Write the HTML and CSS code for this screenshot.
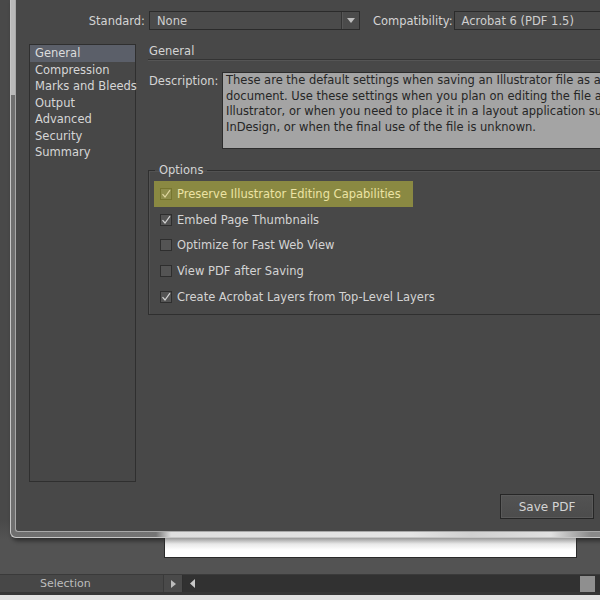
FILE: index.html
```html
<!DOCTYPE html>
<html>
<head>
<meta charset="utf-8">
<link rel="stylesheet" href="styles.css">
</head>
<body>
<div class="screen">
  <div class="desk">
    <div class="frame">
      <div class="dialog">
        <div class="top-row">
          <span class="lbl lbl-std">Standard:</span>
          <div class="select sel-std">
            <span class="sel-text">None</span>
            <span class="sel-arrow"><svg width="8" height="5" viewBox="0 0 8 5"><path d="M0 0H8L4 5Z" fill="#bdbdbd"/></svg></span>
          </div>
          <span class="lbl lbl-comp">Compatibility:</span>
          <div class="select sel-comp">
            <span class="sel-text">Acrobat 6 (PDF 1.5)</span>
          </div>
        </div>
        <div class="main">
          <ul class="nav">
            <li class="active">General</li>
            <li>Compression</li>
            <li>Marks and Bleeds</li>
            <li>Output</li>
            <li>Advanced</li>
            <li>Security</li>
            <li>Summary</li>
          </ul>
          <div class="panel">
            <div class="panel-title">General</div>
            <div class="desc-row">
              <span class="lbl desc-lbl">Description:</span>
              <div class="desc-box">These are the default settings when saving an Illustrator file as an Adobe PDF<br>document. Use these settings when you plan on editing the file again in<br>Illustrator, or when you need to place it in a layout application such as<br>InDesign, or when the final use of the file is unknown.</div>
            </div>
            <fieldset class="options">
              <legend>Options</legend>
              <div class="opt hl"><span class="cb"><svg width="12" height="12" viewBox="0 0 12 12"><path d="M2.5 6.2L5 9L10 2.2" fill="none" stroke="#ddd59e" stroke-width="1.2"/></svg></span><span>Preserve Illustrator Editing Capabilities</span></div>
              <div class="opt"><span class="cb"><svg width="12" height="12" viewBox="0 0 12 12"><path d="M2.5 6.2L5 9L10 2.2" fill="none" stroke="#d2d2d2" stroke-width="1.2"/></svg></span><span>Embed Page Thumbnails</span></div>
              <div class="opt"><span class="cb"></span><span>Optimize for Fast Web View</span></div>
              <div class="opt"><span class="cb"></span><span>View PDF after Saving</span></div>
              <div class="opt"><span class="cb"><svg width="12" height="12" viewBox="0 0 12 12"><path d="M2.5 6.2L5 9L10 2.2" fill="none" stroke="#d2d2d2" stroke-width="1.2"/></svg></span><span>Create Acrobat Layers from Top-Level Layers</span></div>
            </fieldset>
          </div>
        </div>
        <div class="footer">
          <button class="btn">Save PDF</button>
        </div>
      </div>
    </div>
    <div class="doc"></div>
  </div>
  <div class="statusbar">
    <div class="sb-label">Selection</div>
    <div class="sb-btn"><svg width="5" height="8" viewBox="0 0 5 8"><path d="M0 0L5 4L0 8Z" fill="#bdbdbd"/></svg></div>
    <div class="sb-scroll">
      <svg class="sb-left" width="5" height="9" viewBox="0 0 5 9"><path d="M5 0L0 4.5L5 9Z" fill="#c8c8c8"/></svg>
      <div class="sb-thumb"></div>
    </div>
  </div>
  <div class="bottom-edge"></div>
</div>
</body>
</html>
```
FILE: styles.css
```css
html, body {
  margin: 0;
  padding: 0;
}
body {
  width: 600px;
  height: 600px;
  overflow: hidden;
  background: #535353;
  font-family: "DejaVu Sans", sans-serif;
  font-size: 11.5px;
  color: #d4d4d4;
}
.screen {
  display: flex;
  flex-direction: column;
  width: 600px;
  height: 600px;
}
.desk {
  height: 574px;
  background: linear-gradient(#494949 0, #494949 520px, #535353 540px);
  overflow: hidden;
}
.frame {
  margin-left: 10px;
  width: 640px;
  height: 533px;
  border-left: 1px solid #c6c6c6;
  border-bottom: 1px solid #c6c6c6;
  border-bottom-left-radius: 6px;
  padding: 0 0 4px 4px;
  background:
    linear-gradient(#b9b9b9, #b9b9b9) left top / 4px 95px no-repeat,
    linear-gradient(to right, #6f6f6f 0, #747474 145px, #dedede 160px, #e4e4e4 400px, #d0d0d0 460px, #e0e0e0 540px, #8a8a8a 580px);
  box-shadow: 2px 3px 4px rgba(0, 0, 0, 0.45);
}
.dialog {
  height: 532px;
  box-sizing: border-box;
  border-left: 1px solid #a8a8a8;
  border-bottom: 1px solid #a8a8a8;
  border-bottom-left-radius: 3px;
  background: #484848;
  padding-top: 11px;
  display: flex;
  flex-direction: column;
}
.lbl {
  color: #d4d4d4;
  white-space: nowrap;
}
.top-row {
  display: flex;
  align-items: center;
  height: 19px;
}
.lbl-std {
  width: 129px;
  text-align: right;
  margin-right: 4px;
}
.select {
  box-sizing: border-box;
  height: 19px;
  border: 1px solid #2b2b2b;
  background: #4b4b4b;
  display: flex;
  align-items: center;
  color: #cfcfcf;
}
.sel-text {
  padding-left: 7px;
  flex: 1;
  white-space: nowrap;
}
.sel-std {
  width: 211px;
}
.sel-arrow {
  width: 17px;
  height: 17px;
  border-left: 1px solid #343434;
  box-shadow: inset 1px 0 0 #575757;
  display: flex;
  align-items: center;
  justify-content: center;
}
.lbl-comp {
  margin-left: 13px;
  margin-right: 1px;
}
.sel-comp {
  width: 190px;
}
.main {
  display: flex;
  margin-top: 14px;
  padding-left: 13px;
  padding-right: 12px;
}
.nav {
  list-style: none;
  margin: 0;
  padding: 0;
  width: 107px;
  height: 438px;
  box-sizing: border-box;
  border: 1px solid #2f2f2f;
  background: #474747;
  color: #d6d6d6;
  line-height: 16.5px;
}
.nav li {
  padding-left: 5px;
  white-space: nowrap;
}
.nav li.active {
  background: #5b5f69;
  color: #dcdcdc;
}
.panel {
  flex: 1;
  margin-left: 12px;
  display: flex;
  flex-direction: column;
}
.panel-title {
  line-height: 14px;
  padding: 0 0 1px 1px;
  border-bottom: 1px solid #333333;
  box-shadow: 0 1px 0 #555555;
  color: #d4d4d4;
}
.desc-row {
  display: flex;
  margin-top: 12px;
}
.desc-lbl {
  width: 73px;
  padding-left: 1px;
  line-height: 19px;
}
.desc-box {
  flex: 1;
  height: 77px;
  box-sizing: border-box;
  border: 1px solid #2c2c2c;
  background: #a4a4a4;
  color: #262626;
  line-height: 15.6px;
  padding: 0 0 0 3px;
  white-space: nowrap;
  overflow: hidden;
}
.options {
  margin: 14px 0 0 0;
  padding: 4px 0 4px 5px;
  border: 1px solid #2f2f2f;
  box-shadow: inset 1px 1px 0 #525252;
  min-width: 0;
}
.options legend {
  padding: 0 4px;
  margin-left: 1px;
  line-height: 14px;
  color: #d4d4d4;
}
.opt {
  display: flex;
  align-items: center;
  width: fit-content;
  height: 25.75px;
  padding: 0 12px 0 6px;
  box-sizing: border-box;
  white-space: nowrap;
}
.opt.hl {
  background: #8a8942;
  color: #ece3a4;
}
.cb {
  width: 12px;
  height: 12px;
  box-sizing: border-box;
  border: 1px solid #2e2e2e;
  background: #545454;
  margin-right: 5px;
  display: flex;
  align-items: center;
  justify-content: center;
}
.cb svg {
  flex: none;
}
.opt.hl .cb {
  background: #8f8e4c;
  border-color: #76752f;
}
.footer {
  display: flex;
  justify-content: flex-end;
  margin-top: 12px;
  padding-right: 61px;
}
.btn {
  width: 94px;
  height: 25px;
  box-sizing: border-box;
  border: 1px solid #262626;
  box-shadow: inset 0 0 0 1px #5a5a5a;
  background: linear-gradient(#535353, #4c4c4c);
  color: #d4d4d4;
  font: inherit;
  font-size: 12px;
  padding: 0;
}
.doc {
  margin-left: 164px;
  width: 413px;
  height: 20px;
  box-sizing: border-box;
  border: 1px solid #2a2a2a;
  border-top: none;
  background: linear-gradient(#9a9a9a 0, #e8e8e8 6px, #ffffff 12px);
}
.statusbar {
  height: 21px;
  box-sizing: border-box;
  border-top: 1px solid #3a3a3a;
  border-bottom: 3px solid #363636;
  background: #474747;
  display: flex;
}
.sb-label {
  width: 163px;
  padding-left: 40px;
  box-sizing: border-box;
  line-height: 17px;
  font-size: 11px;
  color: #bdbdbd;
}
.sb-btn {
  width: 20px;
  box-sizing: border-box;
  border-left: 1px solid #3a3a3a;
  border-right: 1px solid #2e2e2e;
  background: #4a4a4a;
  display: flex;
  align-items: center;
  justify-content: center;
}
.sb-scroll {
  flex: 1;
  background: #313131;
  display: flex;
  align-items: center;
  padding-left: 7px;
  padding-right: 5px;
}
.sb-left {
  flex: none;
}
.sb-thumb {
  margin-left: auto;
  width: 15px;
  height: 16px;
  background: #8f8f8f;
}
.bottom-edge {
  height: 5px;
  background: #e2e2e2;
}
```
